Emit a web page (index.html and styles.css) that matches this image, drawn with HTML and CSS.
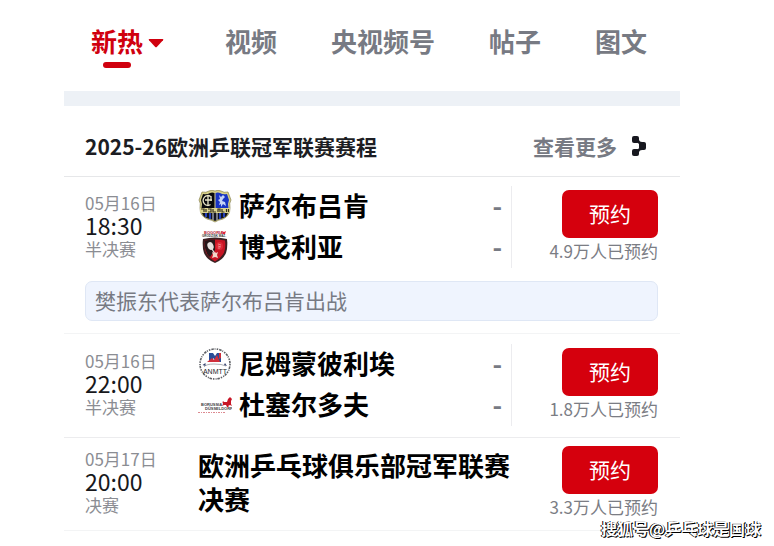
FILE: index.html
```html
<!DOCTYPE html>
<html lang="zh-CN">
<head>
  <meta charset="UTF-8">
  <meta name="viewport" content="width=device-width, initial-scale=1">
  <title>欧洲乒联冠军联赛赛程</title>
  <link rel="stylesheet" href="styles.css">
</head>
<body>

  <!-- TABS -->
  <nav class="tabs">
    <a href="#" class="tab active">新热<svg class="caret" viewBox="0 0 16 10" aria-hidden="true"><path d="M1.5 1h13q1.500 0 .5 1.200L9 8.800q-1 1-2 0L1 2.200Q0 1 1.500 1z"/></svg></a>
    <a href="#" class="tab">视频</a>
    <a href="#" class="tab">央视频号</a>
    <a href="#" class="tab">帖子</a>
    <a href="#" class="tab">图文</a>
  </nav>

  <main class="schedule">
    <header class="schedule-head">
      <h1>2025-26欧洲乒联冠军联赛赛程</h1>
      <a href="#" class="more">查看更多
        <svg class="more-icon" viewBox="0 0 16 22" aria-hidden="true">
          <rect x="1" y="1" width="7" height="7" rx="2"/>
          <rect x="8" y="7" width="7" height="8" rx="2"/>
          <rect x="1" y="14" width="7" height="7" rx="2"/>
          <path d="M6 7.500L8 5q.5 2 3 2v2H9q-1 0-3-1.500zM6 14.500L8 17q.5-2 3-2v-2H9q-1 0-3 1.500z"/>
        </svg>
      </a>
    </header>

    <!-- MATCH 1 -->
    <article class="match">
      <div class="row">
        <div class="when">
          <span>05月16日</span>
          <strong>18:30</strong>
          <span>半决赛</span>
        </div>
        <div class="teams">
          <div class="team">
            <svg class="logo" viewBox="0 0 34 34" aria-hidden="true">
              <path d="M4 2q4 1 7-1 3-1.500 6 0 3-1.500 6 0 3 2 7 1l3 8q-2 3-1 8 0 8-7 11-5 1-8 3-3-2-8-3-7-3-7-11 1-5-1-8z" fill="#d6cf88" stroke="#77713a" stroke-width=".6"/>
              <path d="M5 4q4 1 7-1 2-1 4.500 0v15H3.500q1-5-.5-8z" fill="#08090c"/>
              <path d="M29 4q-4 1-7-1-2-1-4.500 0v15h13q-1-5 .5-8z" fill="#1834c4"/>
              <path d="M12.500 6.500a4.500 5 0 1 0 0 8M10 5v11M7 10h7M13 6v5" fill="none" stroke="#e9e6c8" stroke-width="1.300"/>
              <path d="M21 5l2 2 2-2 2 2-2 2-1 2 3 1 1 4-3-2-2 3 0-3-2 1 1-3-2-2 2-1z" fill="#c6d3f5"/>
              <path d="M4 23h26q-1 4-6 5.500-4 .5-7 2.500-3-2-7-2.500Q5 27 4 23z" fill="#11131b"/>
              <path d="M8 23v4M12 23v6M22 23v6M26 23v4" stroke="#2947c9" stroke-width="1.800"/>
              <path d="M15 23v7M19 23v7" stroke="#d9dceb" stroke-width="1"/>
              <path d="M2 18h30v4.500H2z" fill="#dcd590"/>
              <path d="M3 19h3v3M8 19v3M10 19h3v3h-3M15 19v3h3M20 22v-3h2v3M24 19v3h2.500M28.500 19v3M30.500 19v3" fill="none" stroke="#35301c" stroke-width="1.200"/>
            </svg>
            <span class="name">萨尔布吕肯</span>
            <span class="score">-</span>
          </div>
          <div class="team">
            <svg class="logo" viewBox="0 0 34 34" aria-hidden="true">
              <text x="6" y="3" class="tiny bogoria">BOGORIA</text>
              <path d="M24 0l2 1 2-1-1 3h-2z" fill="#e02636"/>
              <text x="4" y="6" class="tiny">GRODZISK MAZ.</text>
              <path d="M5 8q12-3 24 0 1 8-1 14-3 7-11 10Q9 29 6 22 4 16 5 8z" fill="#3b2022"/>
              <path d="M7 9.500q10-2 20 0 1 7-1 12-3 6-9 9-6-3-9-9-2-5-1-12z" fill="#c71524"/>
              <path d="M7 9.500q5-1 10-1V19l-5 7q-3-2-4-6-2-5-1-10.500z" fill="#26171a"/>
              <ellipse cx="12.500" cy="15" rx="3" ry="4" transform="rotate(-20 12.500 15)" fill="#e6e1df"/>
              <path d="M14 18l3 5" stroke="#e6e1df" stroke-width="1.300"/>
              <ellipse cx="21.500" cy="15" rx="3.500" ry="4" fill="#dd2937"/>
              <path d="M20 13l3 1M20 15l3 1M20 17h2" stroke="#f39a9c" stroke-width=".8"/>
              <path d="M14 21l2 1 1-1 1 1 2-1-1 3 1 3-3-1-3 1 1-3z" fill="#f2d7ca"/>
            </svg>
            <span class="name">博戈利亚</span>
            <span class="score">-</span>
          </div>
        </div>
        <div class="action">
          <button type="button" class="book">预约</button>
          <span class="count">4.9万人已预约</span>
        </div>
      </div>
      <p class="note">樊振东代表萨尔布吕肯出战</p>
    </article>

    <!-- MATCH 2 -->
    <article class="match">
      <div class="row">
        <div class="when">
          <span>05月16日</span>
          <strong>22:00</strong>
          <span>半决赛</span>
        </div>
        <div class="teams">
          <div class="team">
            <svg class="logo" viewBox="0 0 34 34" aria-hidden="true">
              <circle cx="17" cy="16" r="15" fill="none" stroke="#5e6065" stroke-width="1.600" stroke-dasharray="1.500 1 2.500 .8 1 1.200"/>
              <path d="M11 14V5h4l2 3 2-3h4v9h-4v-4l-2 2-2-2v4z" fill="#284c98"/>
              <path d="M9 14l5-4 2 2 3-5 3 7zM21 5h2v5l-2 1z" fill="#d02f3b"/>
              <path d="M6 19q2-3 10-3t12 2" fill="none" stroke="#8c8f96" stroke-width=".7"/>
              <path d="M4.500 17l3-2v3zM27 15l2 3-3-1z" fill="#36436f"/>
              <text x="17" y="26" class="anmtt">ANMTT</text>
            </svg>
            <span class="name">尼姆蒙彼利埃</span>
            <span class="score">-</span>
          </div>
          <div class="team">
            <svg class="logo" viewBox="0 0 34 34" aria-hidden="true">
              <text x="3" y="17" class="borussia">BORUSSIA</text>
              <text x="7" y="21" class="borussia">DÜSSELDORF</text>
              <path d="M25 15q-1-2 0-3l1 1h3l1-3 2-2 2 2-1 2v3l1 2-2-1-2 1 1 1h-2l-1-2h-2l-2 1z" fill="#c71627"/>
              <path d="M0 23.500h27" stroke="#dc8990" stroke-width="1" stroke-dasharray="2 1 1 1"/>
            </svg>
            <span class="name">杜塞尔多夫</span>
            <span class="score">-</span>
          </div>
        </div>
        <div class="action">
          <button type="button" class="book">预约</button>
          <span class="count">1.8万人已预约</span>
        </div>
      </div>
    </article>

    <!-- FINAL -->
    <article class="match final">
      <div class="row">
        <div class="when">
          <span>05月17日</span>
          <strong>20:00</strong>
          <span>决赛</span>
        </div>
        <h2 class="event">欧洲乒乓球俱乐部冠军联赛决赛</h2>
        <div class="action">
          <button type="button" class="book">预约</button>
          <span class="count">3.3万人已预约</span>
        </div>
      </div>
    </article>
  </main>

  <div class="watermark">搜狐号@乒乓球是国球</div>

</body>
</html>
```
FILE: styles.css
```css
/* base */
* { box-sizing: border-box; }
body {
  margin: 0;
  padding: 0 94px 0 64px;
  background: #fff;
  color: #000;
  font-family: "Noto Sans CJK SC", "Noto Sans", sans-serif;
}
a { color: inherit; text-decoration: none; }
h1, h2, p { margin: 0; }

/* tabs */
.tabs {
  display: flex;
  gap: 54px;
  padding: 22px 27px 23px;
  border-bottom: 15px solid #edf1f6;
}
.tab {
  height: 46px;
  font-size: 26px;
  line-height: 38px;
  font-weight: 700;
  color: #777a83;
  white-space: nowrap;
}
.tab.active {
  width: 80px;
  color: #d0000e;
}
.tab.active::after {
  content: "";
  display: block;
  width: 28px;
  height: 6px;
  margin: 2px 0 0 12px;
  border-radius: 3px;
  background: #d0000e;
}
.caret {
  width: 16px;
  height: 10px;
  margin-left: 5px;
  vertical-align: 4px;
  fill: #d0000e;
}

/* schedule head */
.schedule-head {
  display: flex;
  justify-content: space-between;
  align-items: center;
  height: 71px;
  padding: 10px 33px 0 21px;
  border-bottom: 1px solid #e6e7e9;
}
.schedule-head h1 {
  font-size: 21px;
  line-height: 30px;
  font-weight: 700;
  color: #1c1d23;
}
.more {
  display: flex;
  align-items: center;
  gap: 14px;
  font-size: 21px;
  line-height: 30px;
  font-weight: 700;
  color: #777a83;
}
.more-icon { width: 16px; height: 22px; fill: #17181f; }

/* match */
.match {
  padding: 9px 22px 12px 21px;
  border-bottom: 1px solid #f3f4f5;
}
.match + .match {
  padding-top: 10px;
  padding-bottom: 11px;
  border-color: #ececee;
}
.match.final {
  padding-top: 4px;
  padding-bottom: 6px;
  border-color: #f3f4f5;
}
.row {
  display: grid;
  grid-template-columns: 113px 1fr 146px;
  min-height: 82px;
}
.when {
  display: flex;
  flex-direction: column;
  padding-top: 5px;
  font-size: 17px;
  line-height: 23px;
  color: #8b8d93;
}
.when strong {
  font-size: 23px;
  font-weight: 400;
  color: #17181c;
}
.teams { border-right: 1px solid #ececef; }
.team {
  display: flex;
  align-items: center;
  gap: 7px;
  height: 41px;
  padding-right: 9px;
}
.logo { width: 34px; height: 34px; }
.name, .score, .event {
  font-size: 26px;
  line-height: 34px;
  font-weight: 700;
}
.name, .score { padding-bottom: 4px; }
.score { margin-left: auto; color: #777a83; }
.event { padding-top: 6px; }

/* booking */
.action {
  display: flex;
  flex-direction: column;
  align-items: flex-end;
  padding-top: 4px;
}
.book {
  width: 96px;
  height: 48px;
  padding: 0 0 2px;
  border: none;
  border-radius: 7px;
  background: #d5000d;
  color: #fff;
  font-family: inherit;
  font-size: 21px;
  cursor: pointer;
}
.count {
  font-size: 17px;
  line-height: 26px;
  color: #7b7d84;
}
.note {
  margin-top: 13px;
  padding: 0 9px 2px;
  border: 1px solid #dfe7f5;
  border-radius: 7px;
  background: #eff4fe;
  color: #777a83;
  font-size: 21px;
  line-height: 36px;
}

/* logo lettering */
.tiny { font: 700 3px "Liberation Sans", sans-serif; fill: #333; }
.bogoria { font-size: 4px; fill: #b3202c; }
.anmtt { font: 400 7px "Liberation Sans", sans-serif; text-anchor: middle; fill: #26272c; }
.borussia { font: 700 4px "Liberation Sans", sans-serif; fill: #3c3d42; }

/* watermark */
.watermark {
  position: absolute;
  right: 13px;
  bottom: 6px;
  color: #fff;
  font-size: 16px;
  line-height: 24px;
  font-weight: 700;
  text-shadow: 1px 1px 0 #000, -1px 0 0 #000;
}
```
